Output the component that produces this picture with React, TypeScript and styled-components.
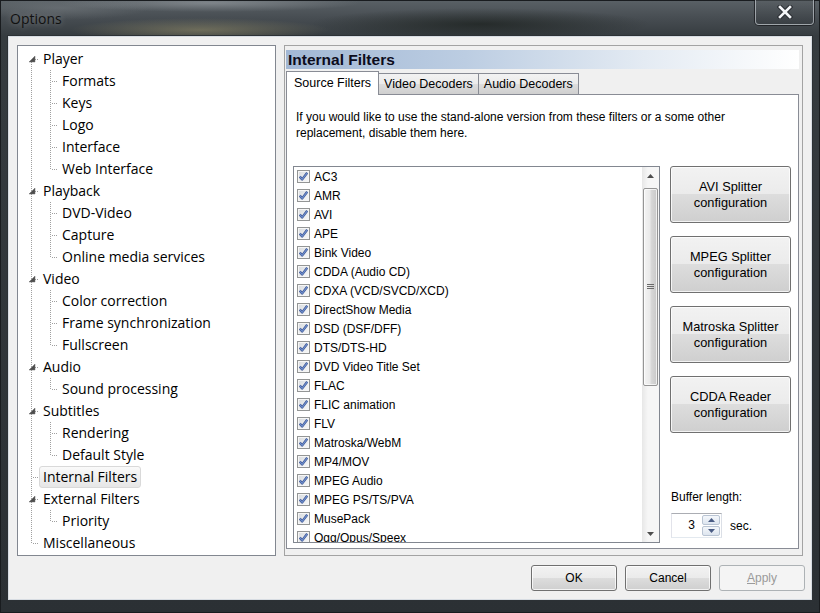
import React from "react";
import styled, { createGlobalStyle, css } from "styled-components";

interface TreeNode {
  label: string;
  children: string[];
  selected?: boolean;
}

const tree: TreeNode[] = [
  { label: "Player", children: ["Formats", "Keys", "Logo", "Interface", "Web Interface"] },
  { label: "Playback", children: ["DVD-Video", "Capture", "Online media services"] },
  { label: "Video", children: ["Color correction", "Frame synchronization", "Fullscreen"] },
  { label: "Audio", children: ["Sound processing"] },
  { label: "Subtitles", children: ["Rendering", "Default Style"] },
  { label: "Internal Filters", children: [], selected: true },
  { label: "External Filters", children: ["Priority"] },
  { label: "Miscellaneous", children: [] },
];

const filters = [
  "AC3",
  "AMR",
  "AVI",
  "APE",
  "Bink Video",
  "CDDA (Audio CD)",
  "CDXA (VCD/SVCD/XCD)",
  "DirectShow Media",
  "DSD (DSF/DFF)",
  "DTS/DTS-HD",
  "DVD Video Title Set",
  "FLAC",
  "FLIC animation",
  "FLV",
  "Matroska/WebM",
  "MP4/MOV",
  "MPEG Audio",
  "MPEG PS/TS/PVA",
  "MusePack",
  "Ogg/Opus/Speex",
];

const sideButtons = [
  ["AVI Splitter", "configuration"],
  ["MPEG Splitter", "configuration"],
  ["Matroska Splitter", "configuration"],
  ["CDDA Reader", "configuration"],
];

//#region Styled components

const GlobalStyle = createGlobalStyle`
  html, body {
    margin: 0;
    padding: 0;
  }
  body {
    width: 820px;
    height: 613px;
    overflow: hidden;
    background: #1f2326;
    font-family: "Liberation Sans", Arial, sans-serif;
  }
  * {
    box-sizing: border-box;
  }
`;

const Window = styled.div`
  width: 820px;
  height: 613px;
  display: flex;
  flex-direction: column;
  background:
    radial-gradient(ellipse 130px 12px at 200px 30px, rgba(170, 160, 115, 0.45), transparent),
    radial-gradient(ellipse 150px 9px at 210px 3px, rgba(175, 180, 185, 0.45), transparent),
    radial-gradient(ellipse 90px 12px at 60px 8px, rgba(130, 136, 140, 0.4), transparent),
    radial-gradient(ellipse 170px 16px at 480px 24px, rgba(15, 20, 15, 0.55), transparent),
    linear-gradient(180deg, #5a6166 0px, #474d52 18px, #363c40 36px, #2b3034 100%);
  box-shadow: inset 0 0 0 1px #191c1f;
`;

const TitleBar = styled.div`
  height: 36px;
  flex: none;
  display: flex;
  justify-content: space-between;
  padding: 0 6px 0 10px;
`;

const Title = styled.span`
  font-family: "Open Sans", sans-serif;
  font-size: 14px;
  line-height: 38px;
  color: #111;
  text-shadow: 0 0 6px rgba(255, 255, 255, 0.35);
`;

const CloseButton = styled.div`
  width: 59px;
  height: 25px;
  display: flex;
  align-items: center;
  justify-content: center;
  border: 1px solid rgba(230, 235, 240, 0.55);
  border-top: none;
  border-radius: 0 0 4px 4px;
  background: linear-gradient(rgba(90, 96, 100, 0.5), rgba(50, 55, 60, 0.5));
  box-shadow: 0 0 0 1px rgba(20, 22, 25, 0.7);
`;

const Client = styled.div`
  flex: 1;
  min-height: 0;
  margin: 0 8px 13px;
  background: #f0f0f0;
  border: 1px solid #d7dce2;
  box-shadow: 0 0 0 1px #2c3135;
  padding: 8px 6px 8px 8px;
  display: flex;
  flex-direction: column;
`;

const Main = styled.div`
  height: 511px;
  flex: none;
  display: flex;
  gap: 8px;
  margin-right: 2px;
`;

const TreeBox = styled.div`
  width: 259px;
  background: #fff;
  border: 1px solid #828790;
  padding-top: 2px;
  font-family: "Open Sans", sans-serif;
  font-size: 14px;
  color: #000;
  overflow: hidden;
`;

const TreeRow = styled.div`
  height: 22px;
  display: flex;
  align-items: center;
`;

const TreeLabel = styled.span<{ $selected?: boolean }>`
  height: 22px;
  line-height: 20px;
  padding: 0 3px;
  border: 1px solid transparent;
  border-radius: 3px;
  white-space: nowrap;
  ${(p) =>
    p.$selected &&
    css`
      background: linear-gradient(#fafafa, #e6e6e6);
      border-color: #d9d9d9;
    `}
`;

const RightPanel = styled.div`
  flex: 1;
  min-height: 0;
  border: 1px solid #a3a3a3;
  padding: 4px 3px 6px 1px;
  display: flex;
  flex-direction: column;
`;

const Header = styled.div`
  height: 19px;
  flex: none;
  padding-left: 2px;
  font-weight: bold;
  font-size: 15.5px;
  line-height: 19px;
  color: #0c0c1c;
  background: linear-gradient(to right, #a2b8d5 0%, #bccde2 35%, #e4ebf3 70%, #ffffff 100%);
`;

const TabStrip = styled.div`
  height: 24px;
  flex: none;
  margin-top: 1px;
  display: flex;
  align-items: flex-end;
`;

const Tab = styled.div<{ $active?: boolean }>`
  height: ${(p) => (p.$active ? "24px" : "21px")};
  padding: 0 ${(p) => (p.$active ? "7px" : "5px")};
  font-size: 12.5px;
  line-height: ${(p) => (p.$active ? "22px" : "20px")};
  color: #000;
  border: 1px solid #898c95;
  border-bottom: none;
  white-space: nowrap;
  ${(p) =>
    p.$active
      ? css`
          background: #fff;
          margin-bottom: -1px;
          position: relative;
          z-index: 1;
        `
      : css`
          background: linear-gradient(#f2f2f2 0%, #ebebeb 50%, #dddddd 51%, #cfcfcf 100%);
          margin-left: -1px;
        `}
`;

const TabPanel = styled.div`
  flex: 1;
  min-height: 0;
  background: #fff;
  border: 1px solid #898c95;
  padding: 14px 6px 5px 6px;
  display: flex;
  flex-direction: column;
`;

const Description = styled.p`
  margin: 0 0 25px 3px;
  font-size: 12px;
  line-height: 16px;
  color: #000;
`;

const ContentRow = styled.div`
  flex: 1;
  min-height: 0;
  display: flex;
  gap: 10px;
`;

const ListBox = styled.div`
  width: 367px;
  border: 1px solid #828790;
  background: #fff;
  display: flex;
  overflow: hidden;
`;

const ListItems = styled.div`
  flex: 1;
  overflow: hidden;
`;

const ListItem = styled.div`
  height: 19px;
  display: flex;
  align-items: center;
  gap: 4px;
  padding-left: 3px;
  font-size: 12px;
  color: #000;
  white-space: nowrap;
`;

const CheckBox = styled.span`
  width: 13px;
  height: 13px;
  flex: none;
  display: flex;
  align-items: center;
  justify-content: center;
  border: 1px solid #939595;
  background: linear-gradient(135deg, #d6d9dd 0%, #eceef0 60%, #f8f8f8 100%);
  box-shadow: inset 0 0 0 1px #f6f6f6;
`;

const ScrollBar = styled.div`
  width: 17px;
  flex: none;
  display: flex;
  flex-direction: column;
  background: linear-gradient(to right, #e7e7e7, #f6f6f6 35%, #f6f6f6);
`;

const ScrollArrow = styled.div`
  height: 17px;
  flex: none;
  display: flex;
  align-items: center;
  justify-content: center;
`;

const ScrollTrack = styled.div`
  flex: 1;
  padding: 4px 1px 0;
`;

const Thumb = styled.div`
  height: 198px;
  border: 1px solid #959595;
  border-radius: 2px;
  display: flex;
  align-items: center;
  justify-content: center;
  background: linear-gradient(to right, #f4f4f4 0%, #eaeaea 45%, #d8d8d8 55%, #c8c8c8 100%);
  box-shadow: inset 0 0 0 1px rgba(255, 255, 255, 0.7);
`;

const SideColumn = styled.div`
  width: 121px;
  display: flex;
  flex-direction: column;
`;

const buttonFace = css`
  border: 1px solid #707070;
  border-radius: 3px;
  background: linear-gradient(#f2f2f2 0%, #ebebeb 49%, #dddddd 50%, #cfcfcf 100%);
  box-shadow: inset 0 0 0 1px rgba(255, 255, 255, 0.75);
  font-family: "Liberation Sans", Arial, sans-serif;
  font-size: 12px;
  color: #000;
  display: flex;
  flex-direction: column;
  align-items: center;
  justify-content: center;
`;

const SideButton = styled.div`
  ${buttonFace}
  height: 57px;
  flex: none;
  margin-bottom: 13px;
  font-size: 12.8px;
  line-height: 16px;
  text-align: center;
`;

const Spacer = styled.div`
  flex: 1;
`;

const BufferLabel = styled.div`
  font-size: 12px;
  line-height: 16px;
  color: #000;
  margin: 0 0 8px 1px;
`;

const SpinRow = styled.div`
  height: 25px;
  flex: none;
  margin: 0 0 5px 1px;
  display: flex;
  align-items: center;
  gap: 8px;
  font-size: 12px;
  color: #000;
`;

const SpinBox = styled.div`
  width: 51px;
  height: 25px;
  display: flex;
  background: #fff;
  border: 1px solid;
  border-color: #abadb3 #dbdfe6 #e3e9ef #e2e3ea;
`;

const SpinValue = styled.div`
  flex: 1;
  text-align: right;
  padding-right: 7px;
  line-height: 23px;
`;

const SpinButtons = styled.div`
  width: 19px;
  display: flex;
  flex-direction: column;
  padding: 1px 1px 1px 0;
  gap: 1px;
`;

const SpinHalf = styled.div`
  flex: 1;
  display: flex;
  align-items: center;
  justify-content: center;
  border: 1px solid #b9c4d3;
  border-radius: 2px;
  background: linear-gradient(#f4f7fb, #dde5ef);
`;

const ButtonBar = styled.div`
  margin-top: 9px;
  display: flex;
  justify-content: flex-end;
  gap: 8px;
`;

const DialogButton = styled.div<{ $disabled?: boolean }>`
  ${buttonFace}
  width: 86px;
  height: 26px;
  ${(p) =>
    p.$disabled &&
    css`
      border-color: #adb2b5;
      background: #f4f4f4;
      box-shadow: none;
      color: #9a9a9a;
    `}
`;

const Mnemonic = styled.span`
  text-decoration: underline;
`;

//#endregion

const TreeGuide: React.FC<{
  child?: boolean;
  first?: boolean;
  last?: boolean;
  lastChild?: boolean;
  expandable?: boolean;
}> = ({ child, first, last, lastChild, expandable }) => {
  const dot = { stroke: "#a0a0a0", strokeWidth: 1, strokeDasharray: "1 1" };
  if (child) {
    return (
      <svg width="40" height="22" style={{ flex: "none" }}>
        <line x1="13.5" y1="0" x2="13.5" y2="22" {...dot} />
        <line x1="32.5" y1="0" x2="32.5" y2={lastChild ? 12 : 22} {...dot} />
        <line x1="34" y1="11.5" x2="40" y2="11.5" {...dot} />
      </svg>
    );
  }
  return (
    <svg width="21" height="22" style={{ flex: "none" }}>
      <line x1="13.5" y1={first ? 12 : 0} x2="13.5" y2={last ? 12 : 22} {...dot} />
      <line x1="15" y1="11.5" x2="21" y2="11.5" {...dot} />
      {expandable && <polygon points="17,8 17,14 11,14" fill="#4d4d4d" stroke="#6e6e6e" strokeWidth="0.5" />}
    </svg>
  );
};

const Tree: React.FC = () => (
  <TreeBox>
    {tree.map((node, i) => (
      <React.Fragment key={node.label}>
        <TreeRow>
          <TreeGuide first={i === 0} last={i === tree.length - 1} expandable={node.children.length > 0} />
          <TreeLabel $selected={node.selected}>{node.label}</TreeLabel>
        </TreeRow>
        {node.children.map((c, j) => (
          <TreeRow key={c}>
            <TreeGuide child lastChild={j === node.children.length - 1} />
            <TreeLabel>{c}</TreeLabel>
          </TreeRow>
        ))}
      </React.Fragment>
    ))}
  </TreeBox>
);

const Check = () => (
  <svg width="11" height="11" viewBox="0 0 11 11">
    <path d="M1.8 5.6 L4.2 8.4 L9.2 1.8" fill="none" stroke="#3a528f" strokeWidth="2.4" strokeLinejoin="round" />
    <path d="M1.8 5.6 L4.2 8.4 L9.2 1.8" fill="none" stroke="#7090cf" strokeWidth="1.1" strokeLinejoin="round" />
  </svg>
);

const Arrow: React.FC<{ down?: boolean; color?: string }> = ({ down, color = "#4e4e4e" }) => (
  <svg width="7" height="4" viewBox="0 0 7 4">
    <polygon points={down ? "0,0 7,0 3.5,4" : "0,4 7,4 3.5,0"} fill={color} />
  </svg>
);

const App: React.FC = () => {
  return (
    <>
      <GlobalStyle />
      <Window>
        <TitleBar>
          <Title>Options</Title>
          <CloseButton>
            <svg width="16" height="14" viewBox="0 0 16 14">
              <path d="M3 2 L13 12 M13 2 L3 12" stroke="#2a2e33" strokeWidth="4.6" strokeLinecap="square" />
              <path d="M3 2 L13 12 M13 2 L3 12" stroke="#f4f6f8" strokeWidth="2.6" strokeLinecap="square" />
            </svg>
          </CloseButton>
        </TitleBar>
        <Client>
          <Main>
            <Tree />
            <RightPanel>
              <Header>Internal Filters</Header>
              <TabStrip>
                <Tab $active>Source Filters</Tab>
                <Tab>Video Decoders</Tab>
                <Tab>Audio Decoders</Tab>
              </TabStrip>
              <TabPanel>
                <Description>
                  If you would like to use the stand-alone version from these filters or a some other
                  <br />
                  replacement, disable them here.
                </Description>
                <ContentRow>
                  <ListBox>
                    <ListItems>
                      {filters.map((f) => (
                        <ListItem key={f}>
                          <CheckBox>
                            <Check />
                          </CheckBox>
                          {f}
                        </ListItem>
                      ))}
                    </ListItems>
                    <ScrollBar>
                      <ScrollArrow>
                        <Arrow />
                      </ScrollArrow>
                      <ScrollTrack>
                        <Thumb>
                          <svg width="7" height="6" viewBox="0 0 7 6">
                            <path d="M0 0.5 H7 M0 2.5 H7 M0 4.5 H7" stroke="#6a6a6a" strokeWidth="1" />
                          </svg>
                        </Thumb>
                      </ScrollTrack>
                      <ScrollArrow>
                        <Arrow down />
                      </ScrollArrow>
                    </ScrollBar>
                  </ListBox>
                  <SideColumn>
                    {sideButtons.map(([a, b]) => (
                      <SideButton key={a}>
                        <span>{a}</span>
                        <span>{b}</span>
                      </SideButton>
                    ))}
                    <Spacer />
                    <BufferLabel>Buffer length:</BufferLabel>
                    <SpinRow>
                      <SpinBox>
                        <SpinValue>3</SpinValue>
                        <SpinButtons>
                          <SpinHalf>
                            <Arrow color="#4a5c84" />
                          </SpinHalf>
                          <SpinHalf>
                            <Arrow down color="#4a5c84" />
                          </SpinHalf>
                        </SpinButtons>
                      </SpinBox>
                      <span>sec.</span>
                    </SpinRow>
                  </SideColumn>
                </ContentRow>
              </TabPanel>
            </RightPanel>
          </Main>
          <ButtonBar>
            <DialogButton>OK</DialogButton>
            <DialogButton>Cancel</DialogButton>
            <DialogButton $disabled>
              <span>
                <Mnemonic>A</Mnemonic>pply
              </span>
            </DialogButton>
          </ButtonBar>
        </Client>
      </Window>
    </>
  );
};

export default App;
